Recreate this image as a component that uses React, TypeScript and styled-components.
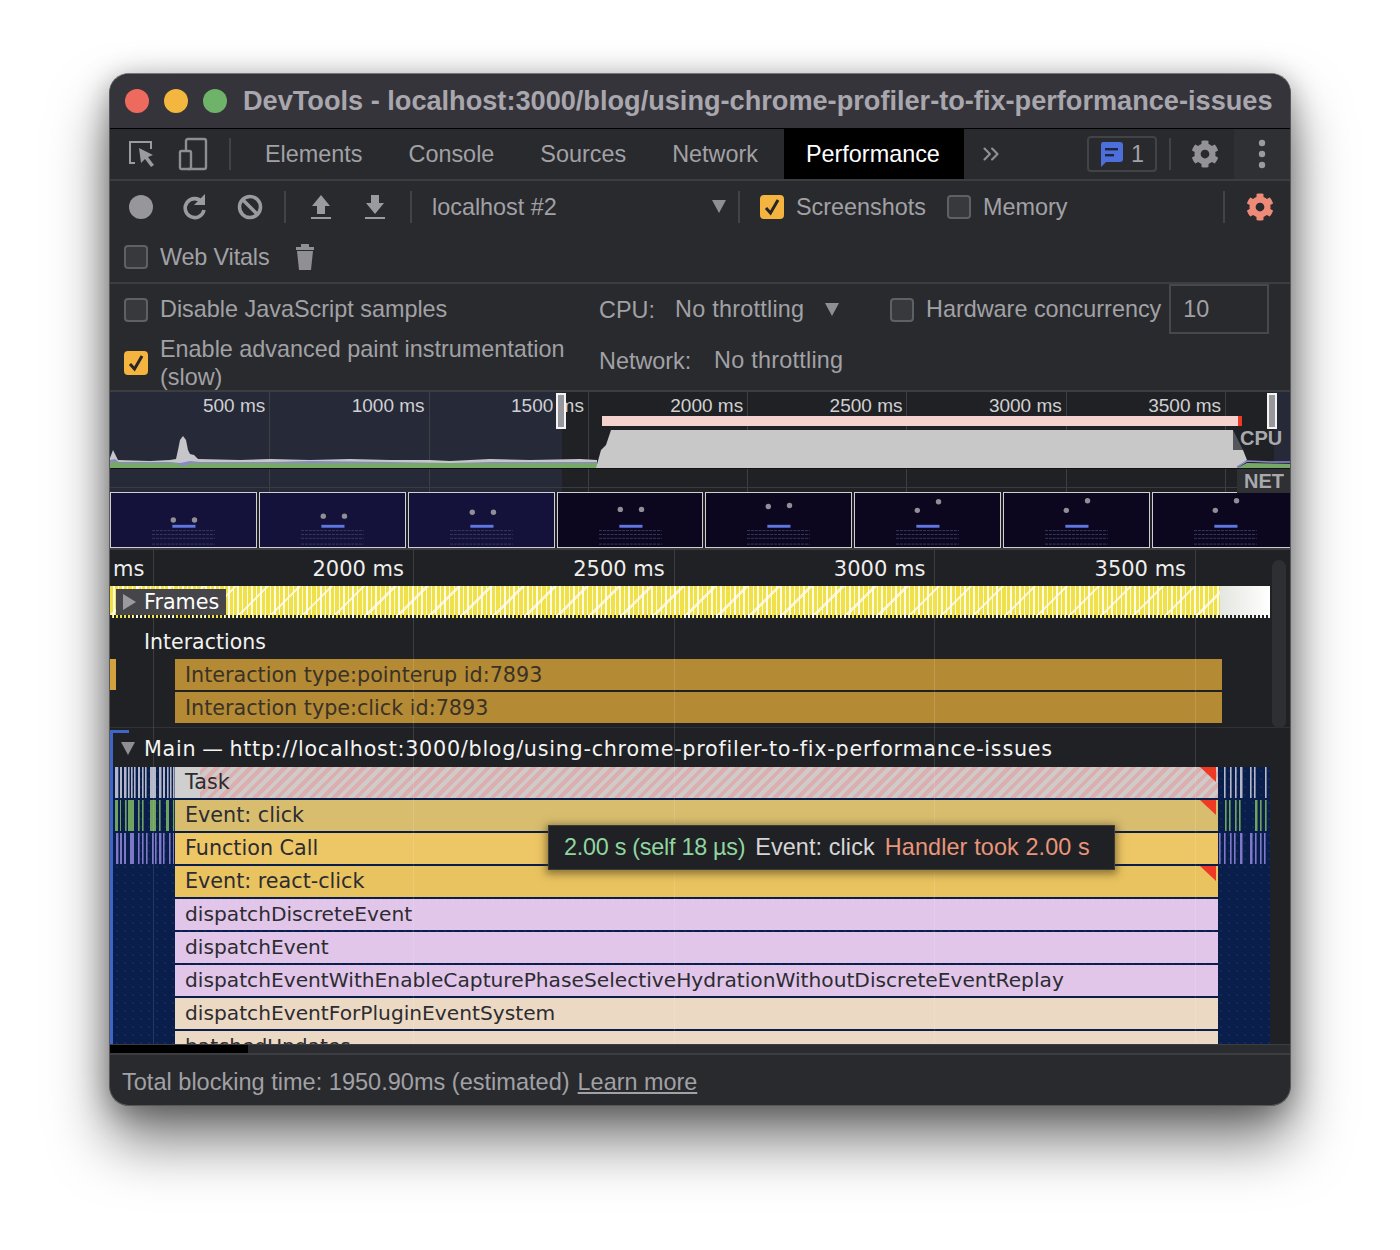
import styled, { createGlobalStyle } from "styled-components";
import { ChevronsRight } from "lucide-react";
import { FaCog } from "react-icons/fa";

const Global = createGlobalStyle`
  html, body {
    margin: 0;
    background: #fff;
  }
  body {
    font-family: "Liberation Sans", Arial, sans-serif;
  }
`;

const Page = styled.div`
  width: 1400px;
  height: 1250px;
  padding: 73px 109px 0;
  box-sizing: border-box;
  overflow: hidden;
`;

const Window = styled.div`
  width: 1182px;
  height: 1033px;
  box-sizing: border-box;
  border: 1px solid #57575a;
  border-top-color: #77777a;
  border-radius: 20px;
  overflow: hidden;
  display: flex;
  flex-direction: column;
  background: #292a2d;
  color: #a1a1a6;
  font-size: 23.4px;
  box-shadow: 0 36px 58px rgba(0, 0, 0, 0.5), 0 6px 30px rgba(0, 0, 0, 0.35);
`;

const TitleBar = styled.div`
  height: 54px;
  flex: none;
  display: flex;
  align-items: center;
  padding-left: 15px;
  background: #36343b;
  border-bottom: 1px solid #000;
`;

const Light = styled.span<{ $color: string }>`
  width: 24px;
  height: 24px;
  margin-right: 15px;
  border-radius: 50%;
  background: ${(p) => p.$color};
`;

const TitleText = styled.div`
  margin-left: 1px;
  font-size: 27.15px;
  font-weight: 700;
  color: #a9a7ae;
  white-space: nowrap;
`;

const TabBar = styled.div`
  height: 50px;
  flex: none;
  display: flex;
  align-items: center;
  border-bottom: 2px solid #3c3d40;
`;

const IconSlot = styled.div<{ $w: number; $ml?: number }>`
  width: ${(p) => p.$w}px;
  margin-left: ${(p) => p.$ml ?? 0}px;
  flex: none;
  display: flex;
  align-items: center;
  justify-content: center;
`;

const Sep = styled.span<{ $ml?: number; $mr?: number }>`
  width: 2px;
  height: 32px;
  flex: none;
  margin-left: ${(p) => p.$ml ?? 0}px;
  margin-right: ${(p) => p.$mr ?? 0}px;
  background: #424346;
`;

const Tab = styled.div<{ $active?: boolean }>`
  height: 100%;
  flex: none;
  display: flex;
  align-items: center;
  padding: ${(p) => (p.$active ? "0 24px 0 22px" : "0 23px")};
  margin-left: ${(p) => (p.$active ? 3 : 0)}px;
  background: ${(p) => (p.$active ? "#000" : "transparent")};
  color: ${(p) => (p.$active ? "#fff" : "#a1a1a6")};
`;

const Badge = styled.div`
  width: 70px;
  height: 36px;
  box-sizing: border-box;
  margin-left: auto;
  flex: none;
  display: flex;
  align-items: center;
  justify-content: center;
  gap: 8px;
  border: 2px solid #424346;
  border-radius: 4px;
`;

const MenuSlot = styled.div`
  width: 56px;
  height: 100%;
  flex: none;
  margin-left: 14px;
  display: flex;
  align-items: center;
  justify-content: center;
  background: #2f3033;
`;

const ToolRow = styled.div`
  height: 51px;
  flex: none;
  display: flex;
  align-items: center;
`;

const ToolRowLast = styled(ToolRow)`
  height: 50px;
  border-bottom: 2px solid #3c3d40;
`;

const ToolLabel = styled.span<{ $w: number; $ml?: number }>`
  width: ${(p) => p.$w}px;
  margin-left: ${(p) => p.$ml ?? 0}px;
  padding-top: 1px;
  flex: none;
  white-space: nowrap;
`;

const VitalsLabel = styled.span`
  letter-spacing: -0.15px;
`;

const ThrottleValue = styled.span<{ $w?: number }>`
  width: ${(p) => (p.$w ? `${p.$w}px` : "auto")};
  flex: none;
  letter-spacing: 0.25px;
`;

const Box = styled.span<{ $on?: boolean; $ml?: number }>`
  width: 24px;
  height: 24px;
  box-sizing: border-box;
  flex: none;
  margin-left: ${(p) => p.$ml ?? 0}px;
  margin-right: 12px;
  display: flex;
  align-items: center;
  justify-content: center;
  border-radius: 4px;
  border: 2px solid ${(p) => (p.$on ? "#f5b33f" : "#5f6064")};
  background: ${(p) => (p.$on ? "#f5b33f" : "#38393c")};
`;

const Tri = styled.span<{ $ml?: number }>`
  width: 0;
  height: 0;
  flex: none;
  margin-left: ${(p) => p.$ml ?? 0}px;
  border-left: 7px solid transparent;
  border-right: 7px solid transparent;
  border-top: 13px solid #8e8e93;
`;

const Settings = styled.div`
  height: 108px;
  flex: none;
  box-sizing: border-box;
  display: grid;
  grid-template-columns: 475px 1fr;
  padding-left: 14px;
  border-bottom: 2px solid #3c3d40;
`;

const SettingsCol = styled.div`
  display: flex;
  flex-direction: column;
`;

const SettingRow = styled.div<{ $h?: number }>`
  height: ${(p) => p.$h ?? 51}px;
  flex: none;
  display: flex;
  align-items: center;
  white-space: nowrap;
`;

const PaintLabel = styled.div`
  width: 420px;
  line-height: 28px;
  white-space: normal;
`;

const NumberField = styled.div`
  width: 100px;
  height: 50px;
  box-sizing: border-box;
  flex: none;
  align-self: flex-start;
  margin-left: 8px;
  padding-left: 12px;
  display: flex;
  align-items: center;
  border: 2px solid #47484b;
`;

const Overview = styled.div`
  height: 100px;
  flex: none;
  position: relative;
  background: linear-gradient(
    90deg,
    #262a38 452px,
    #202124 452px,
    #202124 1164px,
    #262a38 1164px
  );
`;

const OverviewChart = styled.svg`
  position: absolute;
  inset: 0;
`;

const OverviewRuler = styled.div`
  height: 100%;
  padding-left: 1px;
  display: grid;
  grid-template-columns: repeat(7, 159.3px);
`;

const OverviewTick = styled.div`
  box-sizing: border-box;
  padding: 1px 4px 0 0;
  border-right: 1px solid #3e3f42;
  text-align: right;
  font-size: 19px;
  line-height: 25px;
  color: #d0d0d2;
`;

const Handle = styled.div<{ $left: number }>`
  position: absolute;
  left: ${(p) => p.$left}px;
  top: 1px;
  width: 10px;
  height: 36px;
  box-sizing: border-box;
  border: 2px solid #f4f4f4;
  background: #98989c;
`;

const TrackTag = styled.div<{ $top: number; $w: number; $bg: string }>`
  position: absolute;
  right: 0;
  top: ${(p) => p.$top}px;
  width: ${(p) => p.$w}px;
  height: 24px;
  padding-left: 7px;
  box-sizing: border-box;
  font-size: 20px;
  line-height: 24px;
  font-weight: 700;
  color: #a9a9ad;
  background: ${(p) => p.$bg};
`;

const Filmstrip = styled.div`
  height: 58px;
  box-sizing: border-box;
  flex: none;
  display: flex;
  gap: 2px;
  background: #202124;
  overflow: hidden;
  border-bottom: 2px solid #3c3d40;
`;

const Thumb = styled.svg<{ $first?: boolean }>`
  width: 146.86px;
  height: 56px;
  flex: none;
  box-sizing: border-box;
  border: 1px solid #cfcfd2;
  background: ${(p) => (p.$first ? "#14113a" : "#0c071f")};
`;

const Timeline = styled.div`
  flex: 1;
  min-height: 0;
  position: relative;
  overflow: hidden;
  background: #202124;
  font-family: "DejaVu Sans", sans-serif;
  font-size: 20.7px;
`;

const TimeRuler = styled.div`
  height: 36px;
  position: relative;
  display: grid;
  grid-template-columns: 303px repeat(3, 260.7px);
  color: #eee;
  font-size: 21px;
  line-height: 38px;
`;

const TimeTick = styled.div`
  padding-right: 9px;
  text-align: right;
  white-space: nowrap;
`;

const RulerStart = styled.span`
  position: absolute;
  left: 3px;
  top: 0;
`;

const FramesTrack = styled.div`
  height: 32px;
  width: 1160px;
  position: relative;
  background:
    linear-gradient(90deg, transparent 1110px, #e4e6e0 1110px, #fff 1160px),
    repeating-linear-gradient(135deg, transparent 0 20px, rgba(255, 255, 255, 0.7) 20px 22.6px),
    repeating-linear-gradient(90deg, #f0e04a 0 3.2px, #fdfbe0 3.2px 4.6px);
  &::after {
    content: "";
    position: absolute;
    left: 0;
    right: 0;
    bottom: 0;
    height: 3px;
    background: repeating-linear-gradient(90deg, #222 0 2px, transparent 2px 4px);
  }
`;

const FramesTag = styled.div`
  position: absolute;
  left: 6px;
  top: 3px;
  width: 110px;
  height: 26px;
  z-index: 1;
  display: flex;
  align-items: center;
  gap: 8px;
  padding-left: 7px;
  box-sizing: border-box;
  background: #46464a;
  color: #fff;
`;

const RightTri = styled.span`
  width: 0;
  height: 0;
  border-top: 8px solid transparent;
  border-bottom: 8px solid transparent;
  border-left: 13px solid #9b9b9f;
`;

const InteractionTrack = styled.div`
  height: 110px;
  box-sizing: border-box;
  position: relative;
  border-bottom: 1px solid #313235;
`;

const TrackTitle = styled.div`
  height: 41px;
  padding: 0 0 3px 34px;
  display: flex;
  align-items: flex-end;
  box-sizing: border-box;
  line-height: 28px;
  font-size: 20.5px;
  color: #f2f2f2;
`;

const InteractionList = styled.div`
  display: flex;
  flex-direction: column;
  gap: 2px;
  margin-left: 65px;
  width: 1047px;
`;

const InteractionBar = styled.div`
  height: 31px;
  padding-left: 10px;
  line-height: 33px;
  background: #b48a35;
  color: #3a3226;
`;

const InteractionStub = styled.span`
  position: absolute;
  left: 0;
  top: 41px;
  width: 6px;
  height: 31px;
  background: #d3a23f;
`;

const MainHeader = styled.div`
  height: 37px;
  box-sizing: border-box;
  padding-left: 8px;
  display: flex;
  align-items: center;
  gap: 9px;
  color: #f4f4f4;
  letter-spacing: 0.74px;
  word-spacing: -1.5px;
  white-space: nowrap;
`;

const MainTrack = styled.div`
  position: relative;
  border-left: 3px solid #3f65c8;
  margin-top: 2px;
  &::before {
    content: "";
    position: absolute;
    left: -3px;
    top: 0;
    width: 19px;
    height: 3px;
    background: #3f65c8;
  }
`;

const Flame = styled.div`
  width: 1157px;
  display: flex;
  flex-direction: column;
  gap: 2px;
  background-color: #0a1e4b;
  background-image: radial-gradient(#132859 0.7px, transparent 0.8px);
  background-size: 8px 8px;
`;

const FlameRow = styled.div`
  height: 31px;
  display: grid;
  grid-template-columns: 62px 1043px 52px;
`;

const Gutter = styled.svg`
  width: 100%;
  height: 31px;
`;

const FlameBar = styled.div<{ $bg: string; $hatch?: boolean; $long?: boolean; $js?: boolean }>`
  position: relative;
  padding-left: 10px;
  font-size: ${(p) => (p.$js ? 20.2 : 20.7)}px;
  line-height: 31px;
  color: #2c2c31;
  white-space: nowrap;
  overflow: hidden;
  background: ${(p) =>
    p.$hatch
      ? `linear-gradient(90deg, ${p.$bg} 25px, transparent 25px), repeating-linear-gradient(135deg, #cfcbcb 0 4px, #dcaeae 4px 8px)`
      : p.$bg};
  &::after {
    content: "";
    display: ${(p) => (p.$long ? "block" : "none")};
    position: absolute;
    right: 2px;
    top: 0;
    width: 16px;
    height: 15px;
    background: #ee3a24;
    clip-path: polygon(0 0, 100% 0, 100% 100%);
  }
`;

const GridLine = styled.span<{ $x: number }>`
  position: absolute;
  left: ${(p) => p.$x}px;
  top: 0;
  bottom: 0;
  width: 1px;
  background: rgba(255, 255, 255, 0.12);
  pointer-events: none;
`;

const ScrollThumb = styled.span`
  position: absolute;
  right: 4px;
  top: 10px;
  width: 14px;
  height: 168px;
  border-radius: 7px;
  background: #2e2f32;
`;

const Tooltip = styled.div`
  position: absolute;
  left: 438px;
  top: 275px;
  width: 567px;
  height: 45px;
  box-sizing: border-box;
  padding-left: 15px;
  display: flex;
  align-items: center;
  gap: 10px;
  background: #202124;
  border: 1px solid #3a3a3a;
  box-shadow: 0 2px 8px 2px rgba(60, 50, 20, 0.55);
  font-family: "Liberation Sans", Arial, sans-serif;
  font-size: 23.4px;
  color: #d6d6d6;
  white-space: nowrap;
`;

const TipPart = styled.span<{ $color: string; $ls?: number }>`
  color: ${(p) => p.$color};
  letter-spacing: ${(p) => p.$ls ?? 0}px;
`;

const HScroll = styled.div`
  height: 9px;
  flex: none;
  background: #2b2c2f;
  border-top: 1px solid #3c3d40;
  box-sizing: border-box;
`;

const HThumb = styled.div`
  width: 138px;
  height: 100%;
  background: #000;
`;

const Status = styled.div`
  height: 52px;
  flex: none;
  display: flex;
  align-items: center;
  gap: 8px;
  padding: 5px 0 0 12px;
  border-top: 2px solid #3c3d40;
  box-sizing: border-box;
  font-size: 23.55px;
`;

const LearnMore = styled.span`
  font-size: 23.4px;
  text-decoration: underline;
`;

const RecordDot = styled.span`
  width: 24px;
  height: 24px;
  border-radius: 50%;
  background: #96969b;
`;

type Stripe = [number, number];

/* small pseudo random helper so the sample stripes stay the same between runs */
const stripes = (seed: number, width: number): Stripe[] => {
  const out: Stripe[] = [];
  let v = seed;
  for (let x = 1; x < width - 2; x += 5) {
    v = (v * 37 + 11) % 101;
    if (v % 4 !== 0) out.push([x + (v % 2), v % 3 === 0 ? 2.5 : 1.6]);
  }
  return out;
};

const Ticks = ({ color, list, width }: { color: string; list: Stripe[]; width: number }) => (
  <Gutter viewBox={`0 0 ${width} 31`} preserveAspectRatio="none">
    {list.map(([x, w]) => (
      <rect key={x} x={x} y={0} width={w} height={31} fill={color} />
    ))}
  </Gutter>
);

const cpuTop =
  "M0 66 L3 58 L8 68 L40 69 L60 68 L66 67 L68 58 L70 48 L73 44 L76 48 L78 58 L80 62 L84 63 L88 67 L130 68 L160 67 L200 68 L240 67 L280 68 L320 68 L340 69 L380 67 L420 68 L470 67 L487 68";
const cpuMid =
  "M0 68 L5 67 L9 70 L60 70 L70 71 L80 69 L90 70 L160 70 L200 69 L280 70 L340 71 L380 70 L487 70";

const OverviewGraphic = () => (
  <OverviewChart width={1180} height={100} viewBox="0 0 1180 100">
    <rect x={1} y={76} width={1179} height={1} fill="#111" />
    <rect x={0} y={95} width={1127} height={1} fill="#3a3b3e" />
    <path d={`${cpuTop} L487 76 L0 76 Z`} fill="#c6c6ca" />
    <path d={`${cpuMid} L487 76 L0 76 Z`} fill="#8d86cf" />
    <path d="M0 71 L6 69 L10 71 L66 71 L73 74 L80 71 L487 71 L487 76 L0 76 Z" fill="#76a968" />
    <path d="M486 76 L491 58 L496 53 L501 38 L1123 38 L1123 58 L1133 58 L1137 68 L1127 76 Z" fill="#c8c8c8" />
    <path d="M1123 38 L1133 58 L1123 58 Z" fill="#55565a" />
    <path d="M1127 76 L1137 71 L1180 72 L1180 76 Z" fill="#76a968" />
    <path d="M1127 75 L1137 69 L1160 70 L1180 70" fill="none" stroke="#8d86cf" strokeWidth={1.6} />
    <rect x={492} y={24} width={636} height={10} fill="#f4d2cd" />
    <rect x={1128} y={24} width={4} height={10} fill="#ee3a24" />
  </OverviewChart>
);

const thumbs = [
  { dots: [[63, 28], [85, 28]], dim: false },
  { dots: [[64, 24], [86, 24]], dim: false },
  { dots: [[64, 20], [86, 20]], dim: false },
  { dots: [[63, 17], [85, 17]], dim: true },
  { dots: [[63, 14], [85, 13]], dim: true },
  { dots: [[63, 18], [85, 9]], dim: true },
  { dots: [[63, 18], [85, 8]], dim: true },
  { dots: [[63, 18], [85, 8]], dim: true },
];

const textRows = [39, 43, 47, 53];

const FilmThumb = ({ dots, dim }: { dots: number[][]; dim: boolean }) => (
  <Thumb $first={!dim} viewBox="0 0 147 56">
    {dots.map(([x, y]) => (
      <circle key={x} cx={x} cy={y} r={2.8} fill="#8f8f96" />
    ))}
    <rect x={62} y={33} width={24} height={3} fill="#5f77e0" />
    {textRows.map((y) => (
      <line key={y} x1={41} x2={106} y1={y} y2={y} stroke="#383c62" strokeDasharray="3 1" />
    ))}
  </Thumb>
);

const InspectIcon = () => (
  <svg width="28" height="30" viewBox="0 0 28 30" fill="none">
    <path d="M7 24 H2 V3 H23 V10" stroke="#9a9a9f" strokeWidth="2" />
    <path d="M11 9 L25 16 L20 18 L26 26 L23 28 L17 20 L13 24 Z" fill="#9a9a9f" />
  </svg>
);

const DeviceIcon = () => (
  <svg width="30" height="34" viewBox="0 0 30 34" fill="none">
    <path d="M8 13 V4 Q8 2 10 2 H26 Q28 2 28 4 V30 Q28 32 26 32 H10" stroke="#8d8d92" strokeWidth="2.4" />
    <rect x="2" y="14" width="11" height="18" rx="1.5" stroke="#8d8d92" strokeWidth="2.4" />
  </svg>
);

const ReloadIcon = () => (
  <svg width="26" height="28" viewBox="0 0 26 28" fill="none">
    <path d="M20 9 A9.5 9.5 0 1 0 22 17" stroke="#9a9a9f" strokeWidth="3.6" />
    <path d="M23 1 V12 H12 Z" fill="#9a9a9f" />
  </svg>
);

const ClearIcon = () => (
  <svg width="26" height="26" viewBox="0 0 26 26" fill="none">
    <circle cx="13" cy="13" r="10.5" stroke="#9a9a9f" strokeWidth="3.6" />
    <path d="M6 6 L20 20" stroke="#9a9a9f" strokeWidth="3.6" />
  </svg>
);

const ArrowIcon = ({ down }: { down?: boolean }) => (
  <svg width="22" height="26" viewBox="0 0 22 26">
    <path
      d={down ? "M7 1 H15 V9 H20 L11 20 L2 9 H7 Z" : "M11 1 L20 12 H15 V20 H7 V12 H2 Z"}
      fill="#9a9a9f"
    />
    <rect x="1" y="23" width="20" height="2" fill="#9a9a9f" />
  </svg>
);

const TrashIcon = () => (
  <svg width="20" height="28" viewBox="0 0 20 28">
    <rect x="1" y="4" width="18" height="3" fill="#8f8f94" />
    <rect x="6" y="1" width="8" height="3" fill="#8f8f94" />
    <path d="M2 8 H18 L16 27 H4 Z" fill="#8f8f94" />
  </svg>
);

const ChatIcon = () => (
  <svg width="23" height="25" viewBox="0 0 23 25">
    <path d="M3 0 H20 Q23 0 23 3 V17 Q23 20 20 20 H6 L1 25 V3 Q1 0 3 0 Z" fill="#4d6fdc" />
    <rect x="5" y="6" width="13" height="2.4" fill="#1d2440" />
    <rect x="5" y="12" width="9" height="2.4" fill="#1d2440" />
  </svg>
);

const KebabIcon = () => (
  <svg width="8" height="30" viewBox="0 0 8 30" fill="#9a9a9f">
    <circle cx="4" cy="4" r="3.2" />
    <circle cx="4" cy="15" r="3.2" />
    <circle cx="4" cy="26" r="3.2" />
  </svg>
);

const CheckMark = () => (
  <svg width="18" height="18" viewBox="0 0 18 18" fill="none">
    <path d="M3 10 L7.5 15 L15 2" stroke="#26262a" strokeWidth="3" />
  </svg>
);

const flames: {
  label: string;
  bg: string;
  hatch?: boolean;
  long?: boolean;
  js?: boolean;
  tick?: string;
  left?: Stripe[];
  seed?: number;
}[] = [
  {
    label: "Task",
    bg: "#cfcfcf",
    hatch: true,
    long: true,
    tick: "#b4b7c8",
    left: [[2, 3.3], [7, 2], [11, 2.5], [15, 1.6], [18, 1.6], [21, 1.6], [25, 2], [29, 1.6], [32, 1.6], [37, 6], [46, 2.5], [50, 2], [54, 1.6], [57, 1.6], [60, 1.6]],
    seed: 7,
  },
  {
    label: "Event: click",
    bg: "#d8bd6f",
    long: true,
    tick: "#6fa35f",
    left: [[2, 3], [7, 1], [12, 1.6], [15, 6], [25, 1.6], [29, 1.6], [37, 6], [46, 1.6], [53, 3], [60, 1.2]],
    seed: 13,
  },
  {
    label: "Function Call",
    bg: "#edc665",
    tick: "#7f78c8",
    left: [[3, 2.4], [7, 2], [11, 2], [17, 4], [25, 1.6], [29, 1.6], [33, 1.6], [39, 1.6], [42, 1.6], [46, 2.4], [50, 1.6], [56, 1.6], [60, 1]],
    seed: 29,
  },
  { label: "Event: react-click", bg: "#e9c35f", long: true },
  { label: "dispatchDiscreteEvent", bg: "#e1c6ea", js: true },
  { label: "dispatchEvent", bg: "#e1c6ea", js: true },
  { label: "dispatchEventWithEnableCapturePhaseSelectiveHydrationWithoutDiscreteEventReplay", bg: "#e1c6ea", js: true },
  { label: "dispatchEventForPluginEventSystem", bg: "#ecd9c4", js: true },
  { label: "batchedUpdates", bg: "#ecd9c4", js: true },
];

const App = () => (
  <Page>
    <Global />
    <Window>
      <TitleBar>
        <Light $color="#ef6a5e" />
        <Light $color="#f3b63f" />
        <Light $color="#6fb36b" />
        <TitleText>DevTools - localhost:3000/blog/using-chrome-profiler-to-fix-performance-issues</TitleText>
      </TitleBar>

      <TabBar>
        <IconSlot $w={28} $ml={18}><InspectIcon /></IconSlot>
        <IconSlot $w={30} $ml={22}><DeviceIcon /></IconSlot>
        <Sep $ml={21} $mr={11} />
        <Tab>Elements</Tab>
        <Tab>Console</Tab>
        <Tab>Sources</Tab>
        <Tab>Network</Tab>
        <Tab $active>Performance</Tab>
        <IconSlot $w={30} $ml={12}><ChevronsRight size={26} color="#8f8f94" /></IconSlot>
        <Badge><ChatIcon />1</Badge>
        <Sep $ml={12} $mr={19} />
        <IconSlot $w={30}><FaCog size={28} color="#929297" /></IconSlot>
        <MenuSlot><KebabIcon /></MenuSlot>
      </TabBar>

      <ToolRow>
        <IconSlot $w={24} $ml={19}><RecordDot /></IconSlot>
        <IconSlot $w={26} $ml={29}><ReloadIcon /></IconSlot>
        <IconSlot $w={26} $ml={29}><ClearIcon /></IconSlot>
        <Sep $ml={21} $mr={21} />
        <IconSlot $w={22} $ml={3}><ArrowIcon /></IconSlot>
        <IconSlot $w={22} $ml={32}><ArrowIcon down /></IconSlot>
        <Sep $ml={24} $mr={20} />
        <ToolLabel $w={280}>localhost #2</ToolLabel>
        <Tri />
        <Sep $ml={12} $mr={20} />
        <Box $on><CheckMark /></Box>
        <ToolLabel $w={151}>Screenshots</ToolLabel>
        <Box />
        <ToolLabel $w={240}>Memory</ToolLabel>
        <Sep />
        <IconSlot $w={30} $ml={20}><FaCog size={28} color="#ee8a78" /></IconSlot>
      </ToolRow>

      <ToolRowLast>
        <Box $ml={14} />
        <VitalsLabel>Web Vitals</VitalsLabel>
        <IconSlot $w={20} $ml={26}><TrashIcon /></IconSlot>
      </ToolRowLast>

      <Settings>
        <SettingsCol>
          <SettingRow>
            <Box />
            Disable JavaScript samples
          </SettingRow>
          <SettingRow $h={55}>
            <Box $on><CheckMark /></Box>
            <PaintLabel>Enable advanced paint instrumentation (slow)</PaintLabel>
          </SettingRow>
        </SettingsCol>
        <SettingsCol>
          <SettingRow>
            <ToolLabel $w={76}>CPU:</ToolLabel>
            <ThrottleValue $w={150}>No throttling</ThrottleValue>
            <Tri />
            <Box $ml={51} />
            Hardware concurrency
            <NumberField>10</NumberField>
          </SettingRow>
          <SettingRow>
            <ToolLabel $w={115}>Network:</ToolLabel>
            <ThrottleValue>No throttling</ThrottleValue>
          </SettingRow>
        </SettingsCol>
      </Settings>

      <Overview>
        <OverviewRuler>
          {[500, 1000, 1500, 2000, 2500, 3000, 3500].map((ms) => (
            <OverviewTick key={ms}>{ms} ms</OverviewTick>
          ))}
        </OverviewRuler>
        <OverviewGraphic />
        <Handle $left={446} />
        <Handle $left={1157} />
        <TrackTag $top={34} $w={57} $bg="transparent">CPU</TrackTag>
        <TrackTag $top={77} $w={53} $bg="#2f3033">NET</TrackTag>
      </Overview>

      <Filmstrip>
        {thumbs.map((t, i) => (
          <FilmThumb key={i} dots={t.dots} dim={t.dim} />
        ))}
      </Filmstrip>

      <Timeline>
        <TimeRuler>
          <RulerStart>ms</RulerStart>
          <TimeTick>2000 ms</TimeTick>
          <TimeTick>2500 ms</TimeTick>
          <TimeTick>3000 ms</TimeTick>
          <TimeTick>3500 ms</TimeTick>
        </TimeRuler>
        <FramesTrack>
          <FramesTag><RightTri />Frames</FramesTag>
        </FramesTrack>
        <InteractionTrack>
          <InteractionStub />
          <TrackTitle>Interactions</TrackTitle>
          <InteractionList>
            <InteractionBar>Interaction type:pointerup id:7893</InteractionBar>
            <InteractionBar>Interaction type:click id:7893</InteractionBar>
          </InteractionList>
        </InteractionTrack>
        <MainTrack>
          <MainHeader>
            <Tri />
            Main — http://localhost:3000/blog/using-chrome-profiler-to-fix-performance-issues
          </MainHeader>
          <Flame>
            {flames.map((f) => (
              <FlameRow key={f.label}>
                {f.left ? <Ticks color={f.tick ?? ""} list={f.left} width={62} /> : <span />}
                <FlameBar $bg={f.bg} $hatch={f.hatch} $long={f.long} $js={f.js}>{f.label}</FlameBar>
                {f.left ? <Ticks color={f.tick ?? ""} list={stripes(f.seed ?? 1, 52)} width={52} /> : <span />}
              </FlameRow>
            ))}
          </Flame>
        </MainTrack>
        {[43, 303, 564, 824, 1085].map((x) => (
          <GridLine key={x} $x={x} />
        ))}
        <ScrollThumb />
        <Tooltip>
          <TipPart $color="#8fd6a0" $ls={-0.27}>2.00 s (self 18 µs)</TipPart>
          <TipPart $color="#d6d6d6" $ls={0.1}>Event: click</TipPart>
          <TipPart $color="#e8967c" $ls={0.12}>Handler took 2.00 s</TipPart>
        </Tooltip>
      </Timeline>

      <HScroll><HThumb /></HScroll>
      <Status>
        <span>Total blocking time: 1950.90ms (estimated)</span>
        <LearnMore>Learn more</LearnMore>
      </Status>
    </Window>
  </Page>
);

export default App;
